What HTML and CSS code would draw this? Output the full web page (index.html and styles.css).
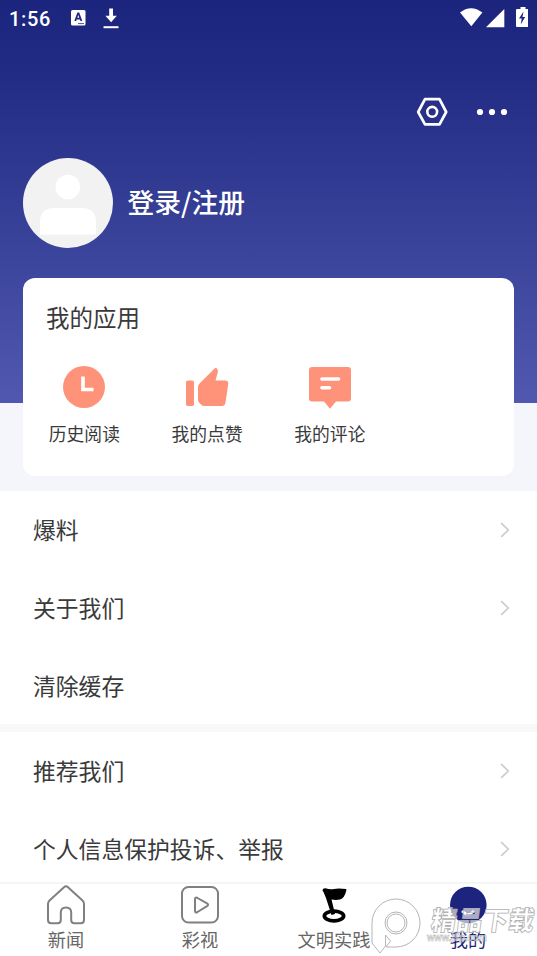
FILE: index.html
```
<!DOCTYPE html>
<html lang="zh-CN">
<head>
<meta charset="utf-8">
<title>我的</title>
<link rel="stylesheet" href="styles.css">
</head>
<body>
<div class="screen">
  <header class="hero">
    <div class="status">
      <span class="clock">1:56</span>
      <svg class="status-left" width="54" height="24" viewBox="0 0 54 24">
        <rect x="1" y="6" width="14.5" height="15.5" rx="1.5" fill="#fff"/>
        <path d="M5.2 17 8 9.3h.6L11.4 17M6.1 14.6h4.4" fill="none" stroke="#20287f" stroke-width="1.8"/>
        <path d="M8 19.6h6" stroke="#20287f" stroke-width=".8"/>
        <path d="M39.2 4.4h3.8v7.4h3.8l-5.7 6.4-5.7-6.4h3.8z" fill="#fff"/>
        <path d="M33.5 23.2h15" stroke="#fff" stroke-width="2"/>
      </svg>
      <svg class="status-right" width="68" height="22" viewBox="0 0 68 22" fill="#fff">
        <path d="M0 5.500Q11-3.200 22.400 5.500L11.300 19.200z"/>
        <path d="M44.300 2v18.200H26z"/>
        <path d="M57.500 2h3V0h5v2h2q1 0 1 1v16q0 1-1 1H57q-1 0-1-1V3q0-1 1-1z"/>
        <path d="m63.500 4.500-4.500 7h2.700l-1 6 4.500-7.500h-2.700z" fill="#20287f"/>
      </svg>
    </div>
    <div class="actions">
      <svg width="32" height="30" viewBox="0 0 32 30" fill="none" stroke="#fff">
        <path d="M9 2.200h14.500L30.200 15l-6.700 12.300H9L2.200 15z" stroke-width="2.700" stroke-linejoin="round"/>
        <circle cx="16.200" cy="14.800" r="4.900" stroke-width="2.600"/>
      </svg>
      <svg width="32" height="8" viewBox="0 0 32 8" fill="#fff"><circle cx="4" cy="4" r="3.100"/><circle cx="16" cy="4" r="3.100"/><circle cx="28" cy="4" r="3.100"/></svg>
    </div>
    <div class="profile">
      <svg width="90" height="90" viewBox="0 0 90 90">
        <circle cx="45" cy="45" r="45" fill="#f2f2f2"/>
        <circle cx="44.800" cy="29" r="12.300" fill="#fff"/>
        <path d="M17 76.500V64q0-14 14-14h28q14 0 14 14v12.500z" fill="#fff"/>
      </svg>
      <span class="login">登录/注册</span>
    </div>
  </header>
  <section class="apps-area">
    <div class="card">
      <h2>我的应用</h2>
      <div class="apps">
        <div class="app">
          <svg width="44" height="44" viewBox="0 0 44 44"><circle cx="22" cy="22" r="21" fill="#fe937a"/><path d="M21 11.500v13h10.500" fill="none" stroke="#fff" stroke-width="3.600"/></svg>
          <span>历史阅读</span>
        </div>
        <div class="app">
          <svg width="44" height="44" viewBox="0 0 44 44" fill="#fe937a"><rect x="1" y="15.500" width="8" height="25.500" rx="1.800"/><path d="M13 22Q13 20 14.500 18.500L29.500 3.600Q30.800 2.200 32 3.600 33.300 5 32.800 7.500L30.500 15.400H40Q43.500 15.400 43.300 18.500L40.500 37.500Q40 41 36.500 41H19Q17.500 41 16.500 40L14 37.500Q13 36.500 13 35z"/></svg>
          <span>我的点赞</span>
        </div>
        <div class="app">
          <svg width="44" height="44" viewBox="0 0 44 44"><path d="M4 2h36q3 0 3 3v28.500q0 3-3 3H28L22 43.800 16 36.500H4q-3 0-3-3V5q0-3 3-3z" fill="#fe937a"/><path d="M14 14h16.500M14 22.700h7.500" stroke="#fff" stroke-width="3.600" stroke-linecap="round"/></svg>
          <span>我的评论</span>
        </div>
      </div>
    </div>
  </section>
  <main class="menu">
    <div class="group">
      <div class="row"><span>爆料</span><svg class="chev" viewBox="0 0 10 16"><path d="m1.200 1.200 7 6.800-7 6.800"/></svg></div>
      <div class="row"><span>关于我们</span><svg class="chev" viewBox="0 0 10 16"><path d="m1.200 1.200 7 6.800-7 6.800"/></svg></div>
      <div class="row"><span>清除缓存</span></div>
    </div>
    <div class="group">
      <div class="row"><span>推荐我们</span><svg class="chev" viewBox="0 0 10 16"><path d="m1.200 1.200 7 6.800-7 6.800"/></svg></div>
      <div class="row"><span>个人信息保护投诉、举报</span><svg class="chev" viewBox="0 0 10 16"><path d="m1.200 1.200 7 6.800-7 6.800"/></svg></div>
    </div>
  </main>
  <nav class="tabs">
    <div class="tab">
      <svg width="40" height="42" viewBox="0 0 40 42" fill="none" stroke="#808080" stroke-width="2" stroke-linejoin="round"><path d="M18 3.200Q20 1.400 22 3.200L36.500 16.500Q38 18 38 20V36Q38 39.300 34.700 39.300H28.500Q25.200 39.300 25.200 36V28.500Q25.200 23.500 20 23.500T14.800 28.500V36Q14.800 39.300 11.500 39.300H5.300Q2 39.300 2 36V20Q2 18 3.500 16.500z"/></svg>
      <span>新闻</span>
    </div>
    <div class="tab">
      <svg width="40" height="42" viewBox="0 0 40 42" fill="none" stroke="#808080" stroke-width="2" stroke-linejoin="round"><rect x="2" y="3" width="36" height="35.500" rx="6.500"/><path d="M15 15.500Q15 12.700 17.500 14L27 19.300Q29.200 20.700 27 22.200L17.500 28Q15 29.300 15 26.500z"/></svg>
      <span>彩视</span>
    </div>
    <div class="tab">
      <svg width="40" height="42" viewBox="0 0 40 42"><path d="M8.500 6.500Q8.500 4 11.500 4.200 16 6 20 5T32 5Q33 5 32 7.500 30.500 14 26 15.500 22 16.300 17.500 15.500L21 30 17.500 31 12 14 9.500 8z"/><ellipse cx="20" cy="32" rx="9.600" ry="4.800" fill="none" stroke="#000" stroke-width="3.800"/></svg>
      <span>文明实践</span>
    </div>
    <div class="tab active">
      <svg width="40" height="42" viewBox="0 0 40 42"><circle cx="20.300" cy="21" r="18.300" fill="#1c247e"/><path d="M14 27Q20 33 26 27" fill="none" stroke="#fff" stroke-width="2.500"/></svg>
      <span>我的</span>
    </div>
    <svg class="watermark" width="166" height="60" viewBox="0 0 166 60">
      <g fill="#fff" fill-opacity=".6" stroke="#b5b5b5" stroke-width="1">
        <path fill-rule="evenodd" d="M1 27A24 24 0 1 1 25 51H15L19.500 45 14.500 39V50L9 57 1 47zM25 16A11 11 0 1 0 25 38A11 11 0 1 0 25 16z"/>
        <circle cx="25" cy="27" r="9" fill="none"/>
      </g>
      <text class="brand" transform="translate(63 34) skewX(-8)" x="-4" y="0" textLength="103" lengthAdjust="spacingAndGlyphs">精品下载</text>
      <text class="url" x="56" y="45" textLength="60" lengthAdjust="spacingAndGlyphs">www.j9p.com</text>
    </svg>
  </nav>
</div>
</body>
</html>
```
FILE: styles.css
```
* { box-sizing: border-box; }
body { margin: 0; font-family: "Noto Sans CJK SC", sans-serif; color: #3a3a3a; }
svg { display: block; flex: none; }
.screen { height: 956px; display: flex; flex-direction: column; overflow: hidden; background: #fff; }
.hero { height: 403px; flex: none; background: linear-gradient(#1c257d 0, #222b83 70px, #5059af 403px); }
.status { height: 36px; display: flex; align-items: flex-start; padding: 4px 9px 0 9px; }
.clock { font: 500 20px/30px Roboto, sans-serif; letter-spacing: .7px; color: #fff; width: 61px; }
.status-left { overflow: visible; }
.status-right { margin: 3px 0 0 auto; }
.actions { display: flex; justify-content: flex-end; align-items: center; gap: 28px; height: 30px; margin-top: 61px; padding-right: 29px; }
.profile { display: flex; align-items: center; gap: 15px; margin: 31px 0 0 22.500px; }
.login { color: #fff; font-size: 26.800px; font-weight: 500; line-height: 40px; padding-bottom: 2px; }
.apps-area { height: 213px; flex: none; margin-top: -125px; padding: 0 23px; }
.apps-area::before { content: ""; display: block; height: 88px; margin: 125px -23px -213px; background: #f5f6fb; }
.card { position: relative; height: 198px; border-radius: 12px; background: #fff; padding: 22px 0 0; }
.card h2 { margin: 0 0 0 23px; font-size: 23.500px; font-weight: 400; line-height: 35px; }
.apps { display: grid; grid-template-columns: repeat(4, 122.750px); margin-top: 30px; }
.app { display: flex; flex-direction: column; align-items: center; font-size: 17.800px; line-height: 26px; gap: 11px; }
.menu { flex: 1; min-height: 0; overflow: hidden; }
.group + .group { border-top: 8px solid #f8f8f8; }
.row { height: 77.700px; display: flex; align-items: center; justify-content: space-between; padding: 0 27px 0 33px; font-size: 22.800px; }
.chev { width: 10px; height: 16px; fill: none; stroke: #ccc; stroke-width: 1.700; }
.tabs { position: relative; height: 74px; flex: none; display: grid; grid-template-columns: repeat(4, 134px); border-top: 2px solid #f5f5f5; background: #fff; }
.tab { display: flex; flex-direction: column; align-items: center; font-size: 18.200px; line-height: 26px; color: #666; margin-left: -1px; margin-right: 1px; }
.tab svg { margin-top: -.500px; }
.tab.active { color: #1c247e; }
.watermark { position: absolute; left: 371px; top: 12px; }
.brand { font-size: 26.500px; font-weight: 900; fill: #fff; fill-opacity: .65; stroke: #b0b0b0; stroke-width: .8px; }
.url { font: bold 11px "Liberation Sans", sans-serif; fill: #fff; fill-opacity: .5; stroke: #aaa; stroke-width: .5px; }
```
